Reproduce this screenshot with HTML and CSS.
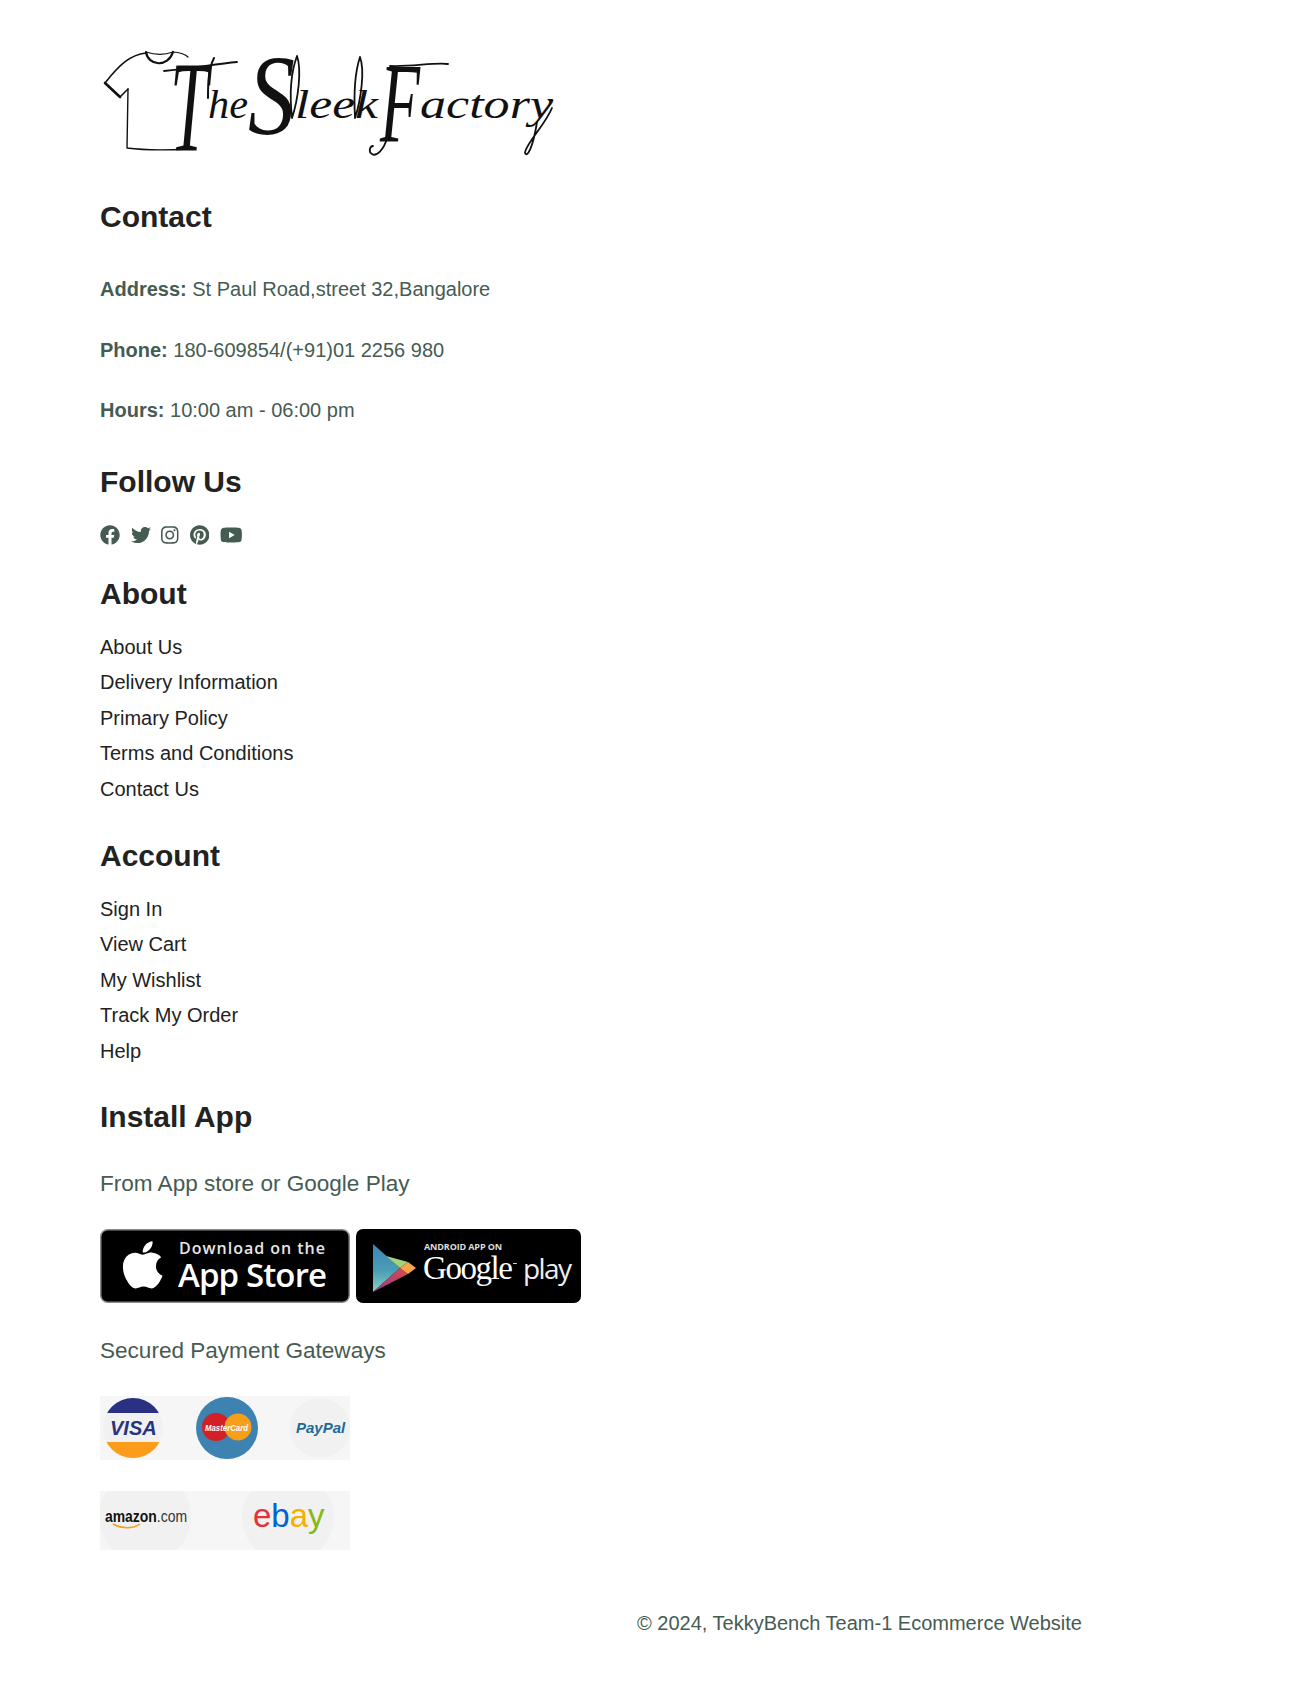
FILE: index.html
```html
<!DOCTYPE html>
<html lang="en">
<head>
<meta charset="utf-8">
<title>The Sleek Factory</title>
<link rel="stylesheet" href="styles.css">
</head>
<body>
<footer class="site-footer">
  <svg class="logo" viewBox="0 0 470 130" width="470" height="130" aria-label="The Sleek Factory">
    <g fill="none" stroke="#111" stroke-linecap="round" stroke-linejoin="round">
      <path d="M46 23 C30 25 20 34 5 53 L20 67 L28 59" stroke-width="1.6"/>
      <path d="M5 53 L20 67" stroke-width="2.6"/>
      <path d="M28 59 L27 118 C50 121 70 120 88 119" stroke-width="1.4"/>
      <path d="M46 22 C48 36 68 38 73 22" stroke-width="2.2"/>
      <path d="M46 22 C55 25 65 25 73 22 C80 22 86 25 88 27" stroke-width="1.2"/>
      <path d="M64 41 C90 39 115 34 137 32" stroke-width="1.8"/>
      <path d="M114 28 C108 40 108 55 108 68" stroke-width="2"/>
      <path d="M197 26 C190 45 190 70 192 88 M197 26 C202 40 198 70 192 88" stroke-width="1.8"/>
      <path d="M260 27 C254 45 254 70 255 88 M260 27 C265 40 261 70 255 88" stroke-width="1.8"/>
      <path d="M290 36 C312 37 335 32 348 34" stroke-width="1.8"/>
      <path d="M287 108 C284 120 276 127 272 124 C268 122 270 116 273 116" stroke-width="1.8"/>
      <path d="M452 78 C445 95 425 115 425 123 C427 128 433 118 437 92" stroke-width="1.8"/>
    </g>
    <text class="logo-script"><tspan class="logo-t" x="70" y="120" textLength="38" lengthAdjust="spacingAndGlyphs">T</tspan><tspan class="logo-sm" x="108" y="88" textLength="40" lengthAdjust="spacingAndGlyphs">he</tspan><tspan class="logo-s" x="148" y="104" textLength="47" lengthAdjust="spacingAndGlyphs">S</tspan><tspan class="logo-sm" x="195" y="88" textLength="83" lengthAdjust="spacingAndGlyphs">leek</tspan> <tspan class="logo-s" x="280" y="112" textLength="40" lengthAdjust="spacingAndGlyphs">F</tspan><tspan class="logo-sm" x="320" y="88" textLength="133" lengthAdjust="spacingAndGlyphs">actory</tspan></text>
  </svg>

  <section class="contact">
    <h4 class="heading heading-contact">Contact</h4>
    <p class="info"><strong>Address:</strong> St Paul Road,street 32,Bangalore</p>
    <p class="info"><strong>Phone:</strong> 180-609854/(+91)01 2256 980</p>
    <p class="info"><strong>Hours:</strong> 10:00 am - 06:00 pm</p>
  </section>

  <section class="follow">
    <h4 class="heading">Follow Us</h4>
    <div class="socials">
      <svg class="icon" viewBox="0 0 512 512" width="20" height="20"><path d="M504 256C504 119 393 8 256 8S8 119 8 256c0 123.78 90.69 226.38 209.25 245V327.69h-63V256h63v-54.64c0-62.15 37-96.48 93.67-96.48 27.14 0 55.52 4.84 55.52 4.84v61h-31.28c-30.8 0-40.41 19.12-40.41 38.73V256h68.78l-11 71.69h-57.78V501C413.31 482.38 504 379.78 504 256z"/></svg>
      <svg class="icon" viewBox="0 0 512 512" width="20" height="20"><path d="M459.37 151.716c.325 4.548.325 9.097.325 13.645 0 138.72-105.583 298.558-298.558 298.558-59.452 0-114.68-17.219-161.137-47.106 8.447.974 16.568 1.299 25.34 1.299 49.055 0 94.213-16.568 130.274-44.832-46.132-.975-84.792-31.188-98.112-72.772 6.498.974 12.995 1.624 19.818 1.624 9.421 0 18.843-1.3 27.614-3.573-48.081-9.747-84.143-51.98-84.143-102.985v-1.299c13.969 7.797 30.214 12.67 47.431 13.319-28.264-18.843-46.781-51.005-46.781-87.391 0-19.492 5.197-37.36 14.294-52.954 51.655 63.675 129.3 105.258 216.365 109.807-1.624-7.797-2.599-15.918-2.599-24.04 0-57.828 46.782-104.934 104.934-104.934 30.213 0 57.502 12.67 76.67 33.137 23.715-4.548 46.456-13.32 66.599-25.34-7.798 24.366-24.366 44.833-46.132 57.827 21.117-2.273 41.584-8.122 60.426-16.243-14.292 20.791-32.161 39.308-52.628 54.253z"/></svg>
      <svg class="icon" viewBox="0 0 448 512" width="17.5" height="20"><path d="M224.1 141c-63.6 0-114.9 51.3-114.9 114.9s51.3 114.9 114.9 114.9S339 319.5 339 255.9 287.7 141 224.1 141zm0 189.6c-41.1 0-74.7-33.5-74.7-74.7s33.5-74.7 74.7-74.7 74.7 33.5 74.7 74.7-33.6 74.7-74.7 74.7zm146.4-194.3c0 14.9-12 26.8-26.8 26.8-14.9 0-26.8-12-26.8-26.8s12-26.8 26.8-26.8 26.8 12 26.8 26.8zm76.1 27.2c-1.7-35.9-9.9-67.7-36.2-93.9-26.2-26.2-58-34.4-93.9-36.2-37-2.1-147.9-2.1-184.9 0-35.8 1.7-67.6 9.9-93.9 36.1s-34.4 58-36.2 93.9c-2.1 37-2.1 147.9 0 184.9 1.7 35.9 9.9 67.7 36.2 93.9s58 34.4 93.9 36.2c37 2.1 147.9 2.1 184.9 0 35.9-1.7 67.7-9.9 93.9-36.2 26.2-26.2 34.4-58 36.2-93.9 2.1-37 2.1-147.8 0-184.8zM398.8 388c-7.8 19.6-22.9 34.7-42.6 42.6-29.5 11.7-99.5 9-132.1 9s-102.7 2.6-132.1-9c-19.6-7.8-34.7-22.9-42.6-42.6-11.7-29.5-9-99.5-9-132.1s-2.6-102.7 9-132.1c7.8-19.6 22.9-34.7 42.6-42.6 29.5-11.7 99.5-9 132.1-9s102.7-2.6 132.1 9c19.6 7.8 34.7 22.9 42.6 42.6 11.7 29.5 9 99.5 9 132.1s2.7 102.7-9 132.1z"/></svg>
      <svg class="icon" viewBox="0 0 496 512" width="19.4" height="20"><path d="M496 256c0 137-111 248-248 248-25.6 0-50.2-3.9-73.4-11.1 10.1-16.5 25.2-43.5 30.8-65 3-11.6 15.4-59 15.4-59 8.1 15.4 31.7 28.5 56.8 28.5 74.8 0 128.7-68.8 128.7-154.3 0-81.9-66.9-143.2-152.9-143.2-107 0-163.9 71.8-163.9 150.1 0 36.4 19.4 81.7 50.3 96.1 4.7 2.2 7.2 1.2 8.3-3.3.8-3.4 5-20.3 6.9-28.1.6-2.5.3-4.7-1.7-7.1-10.1-12.5-18.3-35.3-18.3-56.6 0-54.7 41.4-107.6 112-107.6 60.9 0 103.6 41.5 103.6 100.9 0 67.1-33.9 113.6-78 113.6-24.3 0-42.6-20.1-36.7-44.8 7-29.5 20.5-61.3 20.5-82.6 0-19-10.2-34.9-31.4-34.9-24.9 0-44.9 25.7-44.9 60.2 0 22 7.4 36.8 7.4 36.8s-24.5 103.8-29 123.2c-5 21.4-3 51.6-.9 71.2C65.4 450.9 0 361.1 0 256 0 119 111 8 248 8s248 111 248 248z"/></svg>
      <svg class="icon" viewBox="0 0 576 512" width="22.5" height="20"><path d="M549.655 124.083c-6.281-23.65-24.787-42.276-48.284-48.597C458.781 64 288 64 288 64S117.22 64 74.629 75.486c-23.497 6.322-42.003 24.947-48.284 48.597-11.412 42.867-11.412 132.305-11.412 132.305s0 89.438 11.412 132.305c6.281 23.65 24.787 41.5 48.284 47.821C117.22 448 288 448 288 448s170.78 0 213.371-11.486c23.497-6.321 42.003-24.171 48.284-47.821 11.412-42.867 11.412-132.305 11.412-132.305s0-89.438-11.412-132.305zm-317.51 213.508V175.185l142.739 81.205-142.739 81.201z"/></svg>
    </div>
  </section>

  <section class="links links-about">
    <h4 class="heading">About</h4>
    <nav class="link-list">
      <a href="#">About Us</a>
      <a href="#">Delivery Information</a>
      <a href="#">Primary Policy</a>
      <a href="#">Terms and Conditions</a>
      <a href="#">Contact Us</a>
    </nav>
  </section>

  <section class="links links-account">
    <h4 class="heading">Account</h4>
    <nav class="link-list">
      <a href="#">Sign In</a>
      <a href="#">View Cart</a>
      <a href="#">My Wishlist</a>
      <a href="#">Track My Order</a>
      <a href="#">Help</a>
    </nav>
  </section>

  <section class="install">
    <h4 class="heading">Install App</h4>
    <p class="lead">From App store or Google Play</p>
    <div class="badges">
      <svg class="badge" viewBox="0 0 250 74" width="250" height="74">
        <rect x="0.75" y="0.75" width="248.5" height="72.5" rx="7" fill="#000" stroke="#8a8a8a" stroke-width="1.5"/>
        <g transform="translate(22.5 9) scale(0.105)"><path fill="#fff" d="M318.7 268.7c-.2-36.7 16.4-64.4 50-84.8-18.8-26.9-47.2-41.7-84.7-44.6-35.5-2.8-74.3 20.7-88.5 20.7-15 0-49.4-19.7-76.4-19.7C63.3 141.2 4 184.8 4 273.5q0 39.3 14.4 81.2c12.8 36.7 59 126.7 107.2 125.2 25.2-.6 43-17.9 75.8-17.9 31.8 0 48.3 17.9 76.4 17.9 48.6-.7 90.4-82.5 102.6-119.3-65.2-30.7-61.7-90-61.7-91.9zm-56.6-164.2c27.3-32.4 24.8-61.9 24-72.5-24.1 1.4-52 16.4-67.9 34.9-17.5 19.8-27.8 44.3-25.6 71.9 26.1 2 49.9-11.4 69.5-34.3z"/></g>
        <text class="badge-small" x="79" y="25" textLength="146">Download on the</text>
        <text class="badge-large" x="78" y="58" textLength="149">App Store</text>
      </svg>
      <svg class="badge" viewBox="0 0 225 74" width="225" height="74">
        <defs>
          <linearGradient id="play-blue" x1="0" y1="0" x2="0" y2="1">
            <stop offset="0" stop-color="#3a86b4"/>
            <stop offset="0.55" stop-color="#4a9db5"/>
            <stop offset="1" stop-color="#8ad2bf"/>
          </linearGradient>
          <linearGradient id="play-red" x1="1" y1="0" x2="0" y2="1">
            <stop offset="0" stop-color="#dc4a4f"/>
            <stop offset="1" stop-color="#8d3f8f"/>
          </linearGradient>
        </defs>
        <rect width="225" height="74" rx="7" fill="#000"/>
        <polygon points="17,15 17,63 44,39" fill="url(#play-blue)"/>
        <polygon points="30,27 44,39 52,33" fill="#a5d27c"/>
        <polygon points="17,63 44,39 52,45" fill="url(#play-red)"/>
        <polygon points="52,33 60,39 52,45 44,39" fill="#f7a64a"/>
        <text class="play-small" x="68" y="21" textLength="78">ANDROID APP ON</text>
        <text class="play-google" x="67" y="50" textLength="90">Google</text>
        <rect x="157" y="34" width="4" height="1" fill="#ccc"/>
        <text class="play-word" x="167" y="50" textLength="49">play</text>
      </svg>
    </div>
    <p class="lead lead-pay">Secured Payment Gateways</p>
    <svg class="pay pay-first" viewBox="0 0 250 64" width="250" height="64">
      <defs>
        <clipPath id="visa-clip"><circle cx="33" cy="32" r="30"/></clipPath>
      </defs>
      <rect width="250" height="64" fill="#f6f6f6"/>
      <circle cx="33" cy="32" r="30" fill="#f1f1f1"/>
      <g clip-path="url(#visa-clip)">
        <rect x="0" y="0" width="66" height="17" fill="#2a3183"/>
        <rect x="0" y="46" width="66" height="18" fill="#fb9d1b"/>
      </g>
      <text class="pay-visa" x="10" y="39">VISA</text>
      <circle cx="127" cy="32" r="31" fill="#3d82b0"/>
      <circle cx="116" cy="31" r="14" fill="#d32027"/>
      <circle cx="138" cy="31" r="13.5" fill="#f79e1b"/>
      <text class="pay-mc" x="105" y="35" textLength="43" lengthAdjust="spacingAndGlyphs">MasterCard</text>
      <circle cx="220" cy="32" r="30" fill="#f1f1f1"/>
      <text class="pay-pp" x="196" y="37">PayPal</text>
    </svg>
    <svg class="pay pay-second" viewBox="0 0 250 59" width="250" height="59">
      <rect width="250" height="59" fill="#f6f6f6"/>
      <circle cx="45" cy="26" r="46" fill="#f1f1f1"/>
      <circle cx="188" cy="26" r="46" fill="#f1f1f1"/>
      <text class="pay-amazon" x="5" y="31" textLength="82" lengthAdjust="spacingAndGlyphs"><tspan class="amazon-bold">amazon</tspan>.com</text>
      <path d="M13 33 C22 38 33 38 40 33" fill="none" stroke="#f79e1b" stroke-width="1.5"/>
      <text class="pay-ebay" x="153" y="36"><tspan fill="#e53238">e</tspan><tspan fill="#0064d2">b</tspan><tspan fill="#f5af02">a</tspan><tspan fill="#86b817">y</tspan></text>
    </svg>
  </section>

  <p class="copyright">© 2024, TekkyBench Team-1 Ecommerce Website</p>
</footer>
</body>
</html>
```
FILE: styles.css
```css
* { box-sizing: border-box; }

html, body { margin: 0; background: #fff; }

body {
  font-family: "Liberation Sans", Arial, sans-serif;
  color: #222;
}

.site-footer {
  display: flex;
  flex-direction: column;
  align-items: flex-start;
  padding: 30px 100px 0;
  min-height: 1702px;
}

.logo { display: block; flex: none; margin-bottom: 40px; }

.logo-script {
  font-family: "Liberation Serif", serif;
  font-style: italic;
  fill: #111;
}
.logo-sm { font-size: 40px; }
.logo-s { font-size: 115px; }
.logo-t { font-size: 130px; }

.heading {
  margin: 0;
  font-size: 30px;
  font-weight: 700;
  line-height: 34px;
  color: #222;
}

.heading-contact { margin-bottom: 44px; }

.info {
  margin: 0 0 37.5px;
  font-size: 20px;
  line-height: 23px;
  color: #465b52;
}
.info:last-child { margin-bottom: 0; }

.follow { margin-top: 42.5px; }

.socials {
  display: flex;
  gap: 10.7px;
  margin-top: 26px;
}
.icon { display: block; fill: #465b52; }

.links-about { margin-top: 32px; }
.links-account { margin-top: 38px; }
.install { margin-top: 36.75px; }

.link-list {
  display: flex;
  flex-direction: column;
  gap: 12.5px;
}
.links-about .link-list { margin-top: 25.25px; }
.links-account .link-list { margin-top: 25px; }

.link-list a {
  font-size: 20px;
  line-height: 23px;
  color: #222;
  text-decoration: none;
}

.lead {
  margin: 36px 0 31px;
  font-size: 22.56px;
  line-height: 28px;
  color: #465b52;
}
.lead-pay { margin: 34px 0 31px; }

.badges { display: flex; gap: 6px; }
.badge { display: block; }

.badge-small, .badge-large, .play-small, .play-google, .play-word {
  fill: #fff;
  font-family: "Open Sans", "Liberation Sans", sans-serif;
}
.badge-small { font-size: 16px; font-weight: 600; fill: #e6e6e6; }
.badge-large { font-size: 33px; font-weight: 600; }
.play-small { font-size: 9px; font-weight: 700; fill: #ddd; }
.play-google { font-family: "Liberation Serif", serif; font-size: 33px; }
.play-word { font-size: 28px; fill: #eee; }

.pay { display: block; }
.pay-first { margin-bottom: 31px; }

.pay-visa {
  font-family: "Liberation Sans", sans-serif;
  font-size: 20px;
  font-style: italic;
  font-weight: 700;
  fill: #27347f;
}
.pay-mc {
  font-family: "Liberation Sans", sans-serif;
  font-size: 9px;
  font-style: italic;
  font-weight: 700;
  fill: #fff;
}
.pay-pp {
  font-family: "Liberation Sans", sans-serif;
  font-size: 15px;
  font-style: italic;
  font-weight: 700;
  fill: #1f6a96;
}
.pay-amazon {
  font-family: "Liberation Sans", sans-serif;
  font-size: 16px;
  fill: #333;
}
.amazon-bold { font-weight: 700; fill: #111; }
.pay-ebay {
  font-family: "Liberation Sans", sans-serif;
  font-size: 33px;
}

.copyright {
  align-self: flex-start;
  margin: 62px 0 0 537px;
  font-size: 20px;
  line-height: 23px;
  color: #465b52;
  white-space: nowrap;
}
```
